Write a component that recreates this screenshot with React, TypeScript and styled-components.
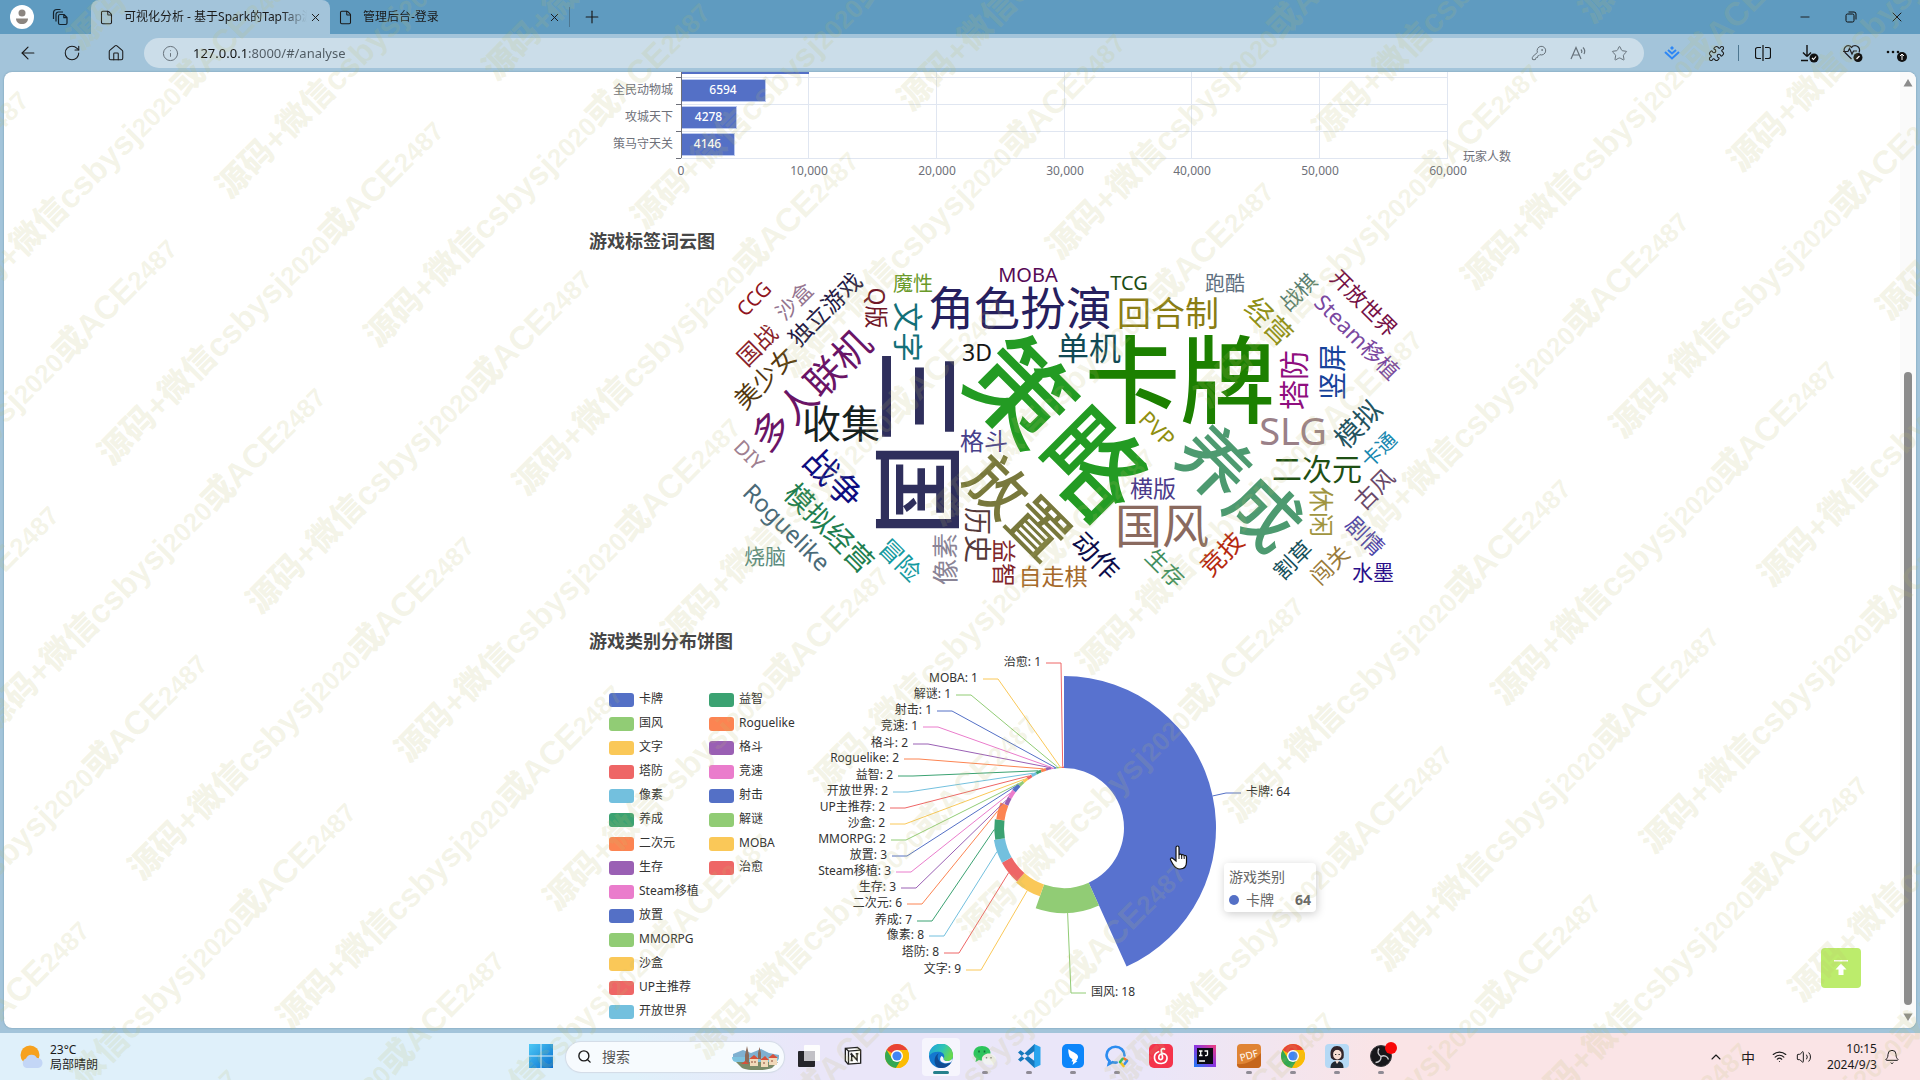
import React from "react";
import styled, { createGlobalStyle } from "styled-components";
import {
  ArrowLeft,
  RotateCw,
  House,
  Info,
  KeyRound,
  Star,
  Puzzle,
  Minus,
  X,
  Plus,
  File as FileIcon,
  Search,
  ChevronUp,
  Wifi,
  Volume2,
  Bell,
} from "lucide-react";

const FONT = `"Noto Sans", "Noto Sans CJK SC", sans-serif`;

const GlobalStyle = createGlobalStyle`
  * { box-sizing: border-box; }
  html, body, #root { height: 100%; }
  body { margin: 0; font-family: ${FONT}; font-size: 12px; color: #1a1a1a; overflow: hidden; }
  button { font: inherit; color: inherit; border: 0; padding: 0; background: none; cursor: pointer; }
  h2, ul { margin: 0; padding: 0; list-style: none; }
  svg { display: block; flex: none; }
`;

/* ---------- data ---------- */

const PALETTE = ["#5470c6", "#91cc75", "#fac858", "#ee6666", "#73c0de", "#3ba272", "#fc8452", "#9a60b4", "#ea7ccc"];

type Slice = { name: string; value: number; elbow: [number, number]; right?: boolean };

const SLICES: Slice[] = [
  { name: "卡牌", value: 64, elbow: [1226, 793], right: true },
  { name: "国风", value: 18, elbow: [1071, 993], right: true },
  { name: "文字", value: 9, elbow: [981, 970] },
  { name: "塔防", value: 8, elbow: [959, 953] },
  { name: "像素", value: 8, elbow: [944, 936] },
  { name: "养成", value: 7, elbow: [932, 921] },
  { name: "二次元", value: 6, elbow: [922, 904] },
  { name: "生存", value: 3, elbow: [916, 888] },
  { name: "Steam移植", value: 3, elbow: [911, 872] },
  { name: "放置", value: 3, elbow: [907, 856] },
  { name: "MMORPG", value: 2, elbow: [906, 840] },
  { name: "沙盒", value: 2, elbow: [905, 824] },
  { name: "UP主推荐", value: 2, elbow: [905, 808] },
  { name: "开放世界", value: 2, elbow: [908, 792] },
  { name: "益智", value: 2, elbow: [913, 776] },
  { name: "Roguelike", value: 2, elbow: [919, 759] },
  { name: "格斗", value: 2, elbow: [928, 744] },
  { name: "竞速", value: 1, elbow: [938, 727] },
  { name: "射击", value: 1, elbow: [952, 711] },
  { name: "解谜", value: 1, elbow: [971, 695] },
  { name: "MOBA", value: 1, elbow: [998, 679] },
  { name: "治愈", value: 1, elbow: [1061, 663] },
];

type Word = [string, number, number, number, number, string];

/* text, centre x, centre y, size, rotation, colour */
const WORDS: Word[] = [
  ["三国", 918, 443, 93, 90, "#2f2f5c"],
  ["策略", 1057, 428, 102, 45, "#239b23"],
  ["卡牌", 1180, 381, 95, 0, "#1c8000"],
  ["养成", 1239, 488, 71, 45, "#4d9a70"],
  ["放置", 1018, 507, 59, 45, "#78783c"],
  ["角色扮演", 1020, 308, 46, 0, "#26205e"],
  ["国风", 1162, 526, 47, 0, "#8a6a5f"],
  ["收集", 841, 424, 39, 0, "#16221f"],
  ["SLG", 1293, 431, 38, 0, "#9a8088"],
  ["多人联机", 811, 390, 38, -45, "#6a1466"],
  ["回合制", 1168, 313, 34, 0, "#8a7d14"],
  ["单机", 1089, 348, 32, 0, "#114a55"],
  ["战争", 834, 478, 34, 45, "#0d0d80"],
  ["文字", 908, 332, 30, 90, "#137078"],
  ["塔防", 1294, 380, 30, -90, "#8f0f7f"],
  ["竖屏", 1333, 372, 28, -90, "#17439a"],
  ["二次元", 1317, 469, 30, 0, "#1f5014"],
  ["模拟经营", 829, 528, 28, 45, "#1f7f50"],
  ["历史", 977, 535, 28, 90, "#553a3a"],
  ["动作", 1096, 556, 27, 45, "#0d0d4a"],
  ["经营", 1269, 321, 27, 45, "#8f8f14"],
  ["模拟", 1358, 424, 27, -45, "#24545f"],
  ["像素", 945, 559, 26, -90, "#8a8496"],
  ["休闲", 1321, 512, 25, 90, "#a09540"],
  ["美少女", 765, 378, 25, -45, "#54380f"],
  ["Roguelike", 787, 527, 24, 45, "#4a6a78"],
  ["格斗", 984, 441, 24, 0, "#47408a"],
  ["益智", 1004, 563, 24, 90, "#80252a"],
  ["竞技", 1222, 554, 25, -45, "#b5290f"],
  ["横版", 1153, 488, 23, 0, "#4a3a8a"],
  ["自走棋", 1053, 576, 23, 0, "#a5692a"],
  ["3D", 977, 352, 23, 0, "#161616"],
  ["独立游戏", 825, 309, 23, -45, "#251a45"],
  ["Q版", 877, 308, 23, 90, "#701828"],
  ["国战", 757, 345, 23, -45, "#8a1f2a"],
  ["冒险", 900, 560, 24, 45, "#159aa0"],
  ["PVP", 1157, 429, 22, 45, "#8f8f10"],
  ["古风", 1374, 489, 23, -45, "#6a4a6a"],
  ["生存", 1165, 568, 22, 45, "#3f8f60"],
  ["Steam移植", 1357, 337, 22, 45, "#7a48a0"],
  ["开放世界", 1364, 303, 21, 45, "#750f45"],
  ["剧情", 1365, 536, 22, 45, "#4f45a8"],
  ["割草", 1293, 560, 22, -45, "#14505a"],
  ["闯关", 1330, 565, 22, -45, "#9a7a3a"],
  ["烧脑", 765, 556, 21, 0, "#5c8c80"],
  ["水墨", 1373, 572, 21, 0, "#2a0f8a"],
  ["MOBA", 1028, 275, 20, 0, "#560a56"],
  ["CCG", 754, 299, 20, -45, "#8f1420"],
  ["沙盒", 794, 301, 21, -45, "#957590"],
  ["魔性", 913, 284, 20, 0, "#6a9a2a"],
  ["DIY", 749, 455, 20, 45, "#a08090"],
  ["TCG", 1129, 283, 20, 0, "#1d4d14"],
  ["跑酷", 1225, 284, 20, 0, "#607080"],
  ["战棋", 1298, 292, 21, -45, "#5a8070"],
  ["卡通", 1379, 450, 20, -45, "#1888b0"],
];

/* ---------- browser chrome ---------- */

const Desktop = styled.div`
  position: relative;
  height: 100vh;
  display: flex;
  flex-direction: column;
  overflow: hidden;
`;

const BrowserWindow = styled.div`
  flex: 1;
  min-height: 0;
  display: flex;
  flex-direction: column;
  background: #a3c4da;
`;

const TabStrip = styled.header`
  height: 34px;
  display: flex;
  align-items: center;
  padding-left: 6px;
  background: #5f9bc0;
`;

const StripButton = styled.button<{ $w: number }>`
  width: ${(p) => p.$w}px;
  height: 34px;
  display: flex;
  align-items: center;
  justify-content: center;
`;

const Tabs = styled.div`
  display: flex;
  align-self: stretch;
  margin-left: 9px;
`;

const Tab = styled.div<{ $active?: boolean }>`
  width: 239px;
  display: flex;
  align-items: center;
  padding: 0 7px 0 8px;
  border-radius: 8px 8px 0 0;
  background: ${(p) => (p.$active ? "#a3c4da" : "transparent")};
`;

const TabTitle = styled.span`
  flex: 1;
  min-width: 0;
  margin-left: 10px;
  overflow: hidden;
  white-space: nowrap;
  line-height: 20px;
  mask-image: linear-gradient(90deg, #000 86%, transparent);
`;

const Divider = styled.span<{ $h: number }>`
  width: 1px;
  height: ${(p) => p.$h}px;
  background: #4d7690;
`;

const Spacer = styled.span`
  flex: 1;
`;

const Toolbar = styled.nav`
  height: 38px;
  display: flex;
  align-items: center;
  padding: 0 1px 0 6px;
`;

const ToolButton = styled.button<{ $w?: number; $c?: string }>`
  width: ${(p) => p.$w ?? 44}px;
  height: 30px;
  display: flex;
  align-items: center;
  justify-content: center;
  color: ${(p) => p.$c ?? "#1a1a1a"};
`;

const AddressBar = styled.div`
  flex: 1;
  height: 30px;
  margin: 0 6px;
  padding: 0 5px 0 18px;
  display: flex;
  align-items: center;
  border-radius: 15px;
  background: #cbdde9;
  color: #66717a;
`;

const AddressInput = styled.input`
  flex: 1;
  min-width: 0;
  margin-left: 14px;
  padding: 0;
  border: 0;
  outline: 0;
  font: 13px/20px ${FONT};
  color: transparent;
  background: linear-gradient(90deg, #111 56px, #4f5a62 56px);
  background-clip: text;
`;

const Frame = styled.div`
  position: relative;
  flex: 1;
  min-height: 0;
  display: flex;
  margin: 0 4px 5px;
  border-radius: 8px;
  overflow: hidden;
  background: #fff;
  box-shadow: 0 0 2px #6d93ab;
`;

/* ---------- page ---------- */

const Page = styled.main`
  flex: 1;
  min-width: 0;
  overflow: hidden;
`;

const Column = styled.div`
  width: 1124px;
  max-width: 100%;
  margin: 0 auto;
`;

const SectionTitle = styled.h2`
  height: 30px;
  padding-left: 199px;
  font-size: 18px;
  line-height: 30px;
  font-weight: 700;
  color: #464646;
`;

const PieRow = styled.div`
  position: relative;
  display: flex;
  align-items: flex-start;
`;

const Legend = styled.ul`
  width: 416px;
  padding: 32px 0 0 219px;
  display: grid;
  grid-auto-flow: column;
  grid-template-rows: repeat(14, 24px);
  grid-template-columns: 100px 97px;
`;

const LegendButton = styled.button`
  height: 24px;
  display: flex;
  align-items: center;
  gap: 5px;
  white-space: nowrap;
  color: #333;
`;

const LegendLabel = styled.span`
  padding-bottom: 2px;
  line-height: 20px;
`;

const Swatch = styled.span<{ $c: string }>`
  width: 25px;
  height: 14px;
  border-radius: 3px;
  background: ${(p) => p.$c};
`;

const Tooltip = styled.div`
  position: absolute;
  left: 834px;
  top: 207px;
  width: 92px;
  height: 49px;
  padding: 3px 5px 4px 5px;
  border-radius: 4px;
  background: #fff;
  box-shadow: 1px 2px 10px rgba(0, 0, 0, 0.2);
  font-size: 14px;
  line-height: 21px;
  color: #666;
`;

const TooltipRow = styled.div`
  display: flex;
  align-items: center;
  gap: 7px;
  padding-top: 2px;
`;

const Dot = styled.span`
  width: 10px;
  height: 10px;
  border-radius: 50%;
  background: #5470c6;
`;

const Value = styled.strong`
  margin-left: auto;
`;

const Pointer = styled.svg`
  position: absolute;
  left: 779px;
  top: 189px;
`;

const BackTop = styled.button`
  position: absolute;
  right: 55px;
  bottom: 40px;
  width: 40px;
  height: 40px;
  display: flex;
  align-items: center;
  justify-content: center;
  border-radius: 4px;
  background: #bcec6c;
`;

const ScrollTrack = styled.div`
  width: 16px;
  display: flex;
  flex-direction: column;
  align-items: center;
  padding: 7px 0;
  background: #fafafa;
`;

const ScrollSpace = styled.div`
  flex: 285;
`;

const ScrollThumb = styled.div`
  flex: 634;
  width: 8px;
  margin-bottom: 8px;
  border-radius: 4px;
  background: #8b8b8b;
`;

/* ---------- taskbar ---------- */

const Taskbar = styled.footer`
  height: 47px;
  display: grid;
  grid-template-columns: 1fr auto 1fr;
  align-items: center;
  background: linear-gradient(90deg, #dff0fa 0%, #dff0fa 33%, #eae6f9 42%, #eae6f9 60%, #fae4e6 72%, #fae4e6 100%);
`;

const Weather = styled.button`
  justify-self: start;
  display: flex;
  align-items: center;
  gap: 7px;
  padding-left: 20px;
  text-align: left;
  line-height: 15px;
`;

const Apps = styled.div`
  display: flex;
  align-items: center;
  padding-left: 2px;
`;

const AppButton = styled.button`
  width: 44px;
  height: 47px;
  display: flex;
  align-items: center;
  justify-content: center;
`;

const AppTile = styled.span<{ $active?: boolean }>`
  width: 38px;
  height: 38px;
  padding-top: 6px;
  display: flex;
  flex-direction: column;
  align-items: center;
  gap: 3px;
  border-radius: 4px;
  background: ${(p) => (p.$active ? "#f6f5fd" : "transparent")};
`;

const AppIcon = styled.span`
  height: 24px;
  display: flex;
  align-items: center;
`;

const Indicator = styled.span<{ $kind?: "dot" | "bar" }>`
  width: ${(p) => (p.$kind === "bar" ? 16 : 6)}px;
  height: 3px;
  border-radius: 2px;
  background: ${(p) => (p.$kind === "bar" ? "#25808c" : p.$kind === "dot" ? "#8f8b95" : "transparent")};
`;

const SearchBox = styled.label`
  width: 218px;
  height: 30px;
  margin: 0 3px;
  padding: 0 4px 0 11px;
  display: flex;
  align-items: center;
  gap: 10px;
  border-radius: 15px;
  background: #f7fbfe;
  box-shadow: 0 0 1px 1px #d3dbe6;
`;

const SearchInput = styled.input`
  flex: 1;
  min-width: 0;
  padding: 0;
  border: 0;
  outline: 0;
  background: none;
  font: 14px/20px ${FONT};
  &::placeholder { color: #555; opacity: 1; }
`;

const Tray = styled.div`
  justify-self: end;
  display: flex;
  align-items: center;
  padding-right: 19px;
`;

const TrayButton = styled.button<{ $w: number }>`
  width: ${(p) => p.$w}px;
  height: 30px;
  display: flex;
  align-items: center;
  justify-content: center;
  font-size: 14px;
`;

const Clock = styled.button`
  width: 60px;
  margin: 0 6px 0 2px;
  text-align: right;
  line-height: 16px;
  white-space: nowrap;
`;

const WatermarkLayer = styled.svg`
  position: absolute;
  inset: 0;
  width: 100%;
  height: 100%;
  pointer-events: none;
`;

/* ---------- charts ---------- */

const BARS = [
  { name: "全民动物城", value: 6594, y: 90 },
  { name: "攻城天下", value: 4278, y: 117 },
  { name: "策马守天关", value: 4146, y: 144 },
];

function BarChart() {
  const x0 = 681;
  const x1 = 1448;
  const at = (v: number) => Math.round(x0 + ((x1 - x0) * v) / 60000);
  return (
    <svg width="1124" height="154" viewBox="390 72 1124 154" fontSize="12" fill="#6e7079">
      {[1, 2, 3, 4, 5, 6].map((i) => (
        <path key={i} d={`M${at(i * 10000) - 0.5} 72V158`} stroke="#e0e6f1" />
      ))}
      {[77, 104, 131, 158].map((y) => (
        <path key={y} d={`M${x0} ${y + 0.5}H${x1}`} stroke="#e0e6f1" />
      ))}
      <rect x={x0} y="60" width="128" height="14" fill="#5470c6" />
      {BARS.map((b) => (
        <g key={b.name}>
          <rect x={x0} y={b.y - 11} width={at(b.value) - x0 + 1} height="23" fill="#bccaf0" />
          <rect x={x0} y={b.y - 10} width={at(b.value) - x0} height="21" fill="#5470c6" />
          <text x={(x0 + at(b.value)) / 2} y={b.y + 4} textAnchor="middle" fill="#fff" fontWeight="500">{b.value}</text>
          <text x="673" y={b.y + 4} textAnchor="end">{b.name}</text>
        </g>
      ))}
      <path d="M681.5 72V158M676 77.5h5M676 104.5h5M676 131.5h5M676 158.5h5" stroke="#6e7079" />
      {[0, 1, 2, 3, 4, 5, 6].map((i) => (
        <text key={i} x={at(i * 10000)} y="175" textAnchor="middle">{i ? `${i}0,000` : "0"}</text>
      ))}
      <text x="1463" y="161">玩家人数</text>
    </svg>
  );
}

function WordCloud() {
  return (
    <svg width="1124" height="370" viewBox="390 256 1124 370" textAnchor="middle">
      {WORDS.map(([text, x, y, size, angle, color]) => (
        <text
          key={text}
          transform={`translate(${x} ${y}) rotate(${angle})`}
          y={Math.round(size * 0.37)}
          fontSize={size}
          fontWeight={size > 50 ? 500 : 400}
          fill={color}
        >
          {text}
        </text>
      ))}
    </svg>
  );
}

function PieChart() {
  const cx = 1064;
  const cy = 828;
  const inner = 60;
  const total = SLICES.reduce((s, d) => s + d.value, 0);
  const point = (r: number, a: number) => `${(cx + r * Math.sin(a)).toFixed(2)} ${(cy - r * Math.cos(a)).toFixed(2)}`;
  let acc = 0;
  return (
    <svg width="708" height="372" viewBox="806 656 708 372" fontSize="12" fill="#333">
      {SLICES.map((d, i) => {
        const a0 = (acc / total) * 2 * Math.PI;
        acc += d.value;
        const a1 = (acc / total) * 2 * Math.PI;
        const mid = (a0 + a1) / 2;
        const outer = inner + (d.value / 64) * (i === 0 ? 92 : 89);
        const color = PALETTE[i % 9];
        const [ex, ey] = d.elbow;
        const dir = d.right ? 1 : -1;
        return (
          <g key={d.name}>
            <path
              d={`M${point(inner, a0)}L${point(outer, a0)}A${outer} ${outer} 0 0 1 ${point(outer, a1)}L${point(inner, a1)}A${inner} ${inner} 0 0 0 ${point(inner, a0)}Z`}
              fill={i === 0 ? "#5872cf" : color}
            />
            <path d={`M${point(outer, mid)}L${ex} ${ey}h${15 * dir}`} stroke={color} fill="none" />
            <text x={ex + 20 * dir} y={ey + 3} textAnchor={d.right ? "start" : "end"}>
              {`${d.name}: ${d.value}`}
            </text>
          </g>
        );
      })}
    </svg>
  );
}

/* ---------- icons ---------- */

function TabPagesIcon() {
  return (
    <svg width="18" height="18" viewBox="0 0 18 18" fill="none" stroke="#14222c" strokeWidth="1.2" strokeLinejoin="round">
      <path d="M9 6.500h4l3 3v5.500a1.500 1.500 0 0 1-1.500 1.500H9A1.500 1.500 0 0 1 7.500 15V8A1.500 1.500 0 0 1 9 6.500zM12.800 6.500v3.200H16" />
      <path d="M5 13.500V6.500A2.500 2.500 0 0 1 7.500 4H12M2.500 11V5A3.500 3.500 0 0 1 6 1.500h3.500" />
    </svg>
  );
}

function ChromeIcon() {
  return (
    <svg width="24" height="24" viewBox="0 0 24 24">
      <circle cx="12" cy="12" r="12" fill="#fbbc05" />
      <path d="M12 12L1.600 6A12 12 0 0 1 22.400 6z" fill="#e94235" />
      <path d="M1.600 6A12 12 0 0 0 11 23.950L16.800 14.800 7 14.500z" fill="#34a853" />
      <path d="M12 6H22.400A12 12 0 0 1 11 23.950L17 14z" fill="#fbbc05" />
      <circle cx="12" cy="12" r="6" fill="#fff" />
      <circle cx="12" cy="12" r="4.600" fill="#4285f4" />
    </svg>
  );
}

const APPS: { name: string; kind?: "dot" | "bar"; icon: React.ReactNode }[] = [
  {
    name: "任务视图",
    icon: (
      <svg width="24" height="24" viewBox="0 0 24 24">
        <rect x="7" y="1" width="16" height="16" rx="1" fill="#fdfdfd" />
        <rect x="1" y="7" width="17" height="16" rx="1" fill="#26262b" />
        <rect x="7" y="7" width="11" height="10" fill="#c2c1c6" />
      </svg>
    ),
  },
  {
    name: "Notion",
    icon: (
      <svg width="18" height="20" viewBox="0 0 20 22">
        <path d="M1.500 2.500L15 1.500l3.500 3v14.500l-14 1-3-3.500z" fill="#fff" stroke="#222" strokeWidth="1.500" />
        <path d="M1.500 2.500l3.500 3 13.500-1M5 5.500v14.500" stroke="#222" strokeWidth="1.500" fill="none" />
        <path d="M8.500 16V9l6 6.500V8.500M7 9h2.500M7.300 16h2.500M13 8.500h3" stroke="#222" strokeWidth="1.600" fill="none" />
      </svg>
    ),
  },
  { name: "Chrome", icon: <ChromeIcon /> },
  {
    name: "Edge",
    kind: "bar",
    icon: (
      <svg width="24" height="24" viewBox="0 0 24 24">
        <defs>
          <linearGradient id="edgeTop" x1="0" y1="0" x2="1" y2="0.400">
            <stop offset="0" stopColor="#1d9fe0" />
            <stop offset="0.600" stopColor="#30c5b4" />
            <stop offset="1" stopColor="#67d94f" />
          </linearGradient>
        </defs>
        <circle cx="12" cy="12" r="12" fill="#1478cf" />
        <path d="M0 12a12 12 0 0 1 24-1c.3 4-2.500 6-5.500 6-3 0-4.500-1.200-4-2.500 1.500-1.500 1-5.500-3-6.500C7 7 2 8.500 0 12z" fill="url(#edgeTop)" />
        <path d="M10 9c-3 3-1 9.500 4.500 10.500 3 .5 6 0 8-1.500-3 5.500-9 7-13.500 5.500C4.500 21 4 12 10 9z" fill="#104b93" />
        <path d="M14.500 14.500c-.5 1.500 1.500 2.700 4 2.600 2-.1 4-1 5-2.600-.2 1.300-.6 2.600-1.300 3.600-3 1.600-8 1.600-10.200-.6-1.500-1.600-1-4 .5-5.500 1.200.3 2 1.500 2 2.500z" fill="#f6f5fd" />
      </svg>
    ),
  },
  {
    name: "微信",
    kind: "dot",
    icon: (
      <svg width="24" height="22" viewBox="0 0 24 22">
        <path d="M9 1c5 0 8.500 3 8.500 7s-3.500 7.500-8.500 7.500c-1 0-2-.1-3-.5L2.500 17l.8-3.500C1.500 12 .5 10.500.5 8.500.5 4 4 1 9 1z" fill="#2dc45c" />
        <path d="M16 8.500c4 0 7.200 2.500 7.200 5.700 0 1.800-.9 3.200-2.300 4.200l.6 2.300-2.600-1.300c-5 1.500-10-1-10-5.200 0-3.200 3.200-5.700 7.100-5.700z" fill="#f1f3f2" />
        <path d="M6 5.500v2M11.500 5.500v2" stroke="#14703a" strokeWidth="1.600" />
        <path d="M13.500 12v1.500M18 12v1.500" stroke="#888" strokeWidth="1.400" />
      </svg>
    ),
  },
  {
    name: "VS Code",
    kind: "dot",
    icon: (
      <svg width="24" height="24" viewBox="0 0 24 24">
        <path d="M17 0l6.500 3v18L17 24z" fill="#2aa5ee" />
        <path d="M17.500 0L1 15.500l2.500 2.300L17.500 7zM17.500 24L1 8.500l2.500-2.300L17.500 17z" fill="#1678bd" />
      </svg>
    ),
  },
  {
    name: "钉钉",
    kind: "dot",
    icon: (
      <svg width="22" height="24" viewBox="0 0 22 24">
        <rect width="22" height="24" rx="5" fill="#0d86fa" />
        <path d="M6.500 5c3 3 9 4 9.500 7.500.2 1.500-1 3-2 4.500h1.500l-5 4 .8-3.500H9.500l1-2.500c-2-.6-3.200-2-3.500-4C6.500 9 6 7 6.500 5z" fill="#fff" />
      </svg>
    ),
  },
  {
    name: "企业微信",
    kind: "dot",
    icon: (
      <svg width="24" height="24" viewBox="0 0 24 24" fill="none" strokeWidth="2.600" strokeLinecap="round">
        <path d="M19.500 11.500c0-5-4-8.700-9-8.700s-9 3.700-9 8.200c0 2.500 1.200 4.500 3 6l-.8 3.200 4-2c1.300.4 2.500.5 4 .3" stroke="#2c8cf0" />
        <path d="M19 14.500l3 2" stroke="#fb6b1f" />
        <path d="M22 17l-2.500 3" stroke="#2c8cf0" />
        <path d="M18.500 22l-2.500-3" stroke="#fcc419" />
        <path d="M15 18l2.500-3" stroke="#2fbf55" />
      </svg>
    ),
  },
  {
    name: "网易云音乐",
    icon: (
      <svg width="24" height="24" viewBox="0 0 24 24">
        <rect width="24" height="24" rx="5" fill="#f5334b" />
        <path d="M15.500 5c-2-1-3.600.2-3.200 2l1.200 6c.5 3-3.300 3.500-3.700 1-.4-3 2-4.500 4.700-4.300 5 .6 5 9.300-2 9.800-8.500.3-9-9.500-3-11.800" fill="none" stroke="#fff" strokeWidth="1.700" strokeLinecap="round" />
      </svg>
    ),
  },
  {
    name: "IntelliJ IDEA",
    icon: (
      <svg width="22" height="22" viewBox="0 0 22 22">
        <defs>
          <linearGradient id="ideaBg" x1="0" y1="1" x2="1" y2="0">
            <stop offset="0" stopColor="#1d7cf5" />
            <stop offset="0.500" stopColor="#8a35e0" />
            <stop offset="1" stopColor="#f0407c" />
          </linearGradient>
        </defs>
        <rect width="22" height="22" fill="url(#ideaBg)" />
        <rect x="3" y="3" width="16" height="16" fill="#0a0a12" />
        <path d="M5 6h3.500M6.700 6v4.500M5 10.500h3.500M10.500 6h3v3.500q0 1.200-2.500 1M5 16h6" stroke="#fff" strokeWidth="1.300" fill="none" />
      </svg>
    ),
  },
  {
    name: "PDF",
    kind: "dot",
    icon: (
      <svg width="24" height="24" viewBox="0 0 24 24">
        <rect width="24" height="24" rx="4" fill="#e08434" />
        <path d="M0 20C8 21 17 17 24 9v11a4 4 0 0 1-4 4H4a4 4 0 0 1-4-4z" fill="#c5651c" />
        <text x="12" y="15" fontSize="10" fill="#fff" textAnchor="middle" transform="rotate(-16 12 12)">PDF</text>
      </svg>
    ),
  },
  { name: "Chrome 2", kind: "dot", icon: <ChromeIcon /> },
  {
    name: "头像",
    kind: "dot",
    icon: (
      <svg width="24" height="24" viewBox="0 0 24 24">
        <rect width="24" height="24" rx="4" fill="#b5d9f5" />
        <path d="M6 14C4 5 8 2 12 2s8 3 6.500 12l-2 2h-8z" fill="#33252a" />
        <ellipse cx="12.300" cy="10.500" rx="4.200" ry="5" fill="#f7ddd2" />
        <path d="M8 8c2-3 6-3 8.500 0L16 4H9z" fill="#33252a" />
        <path d="M5.500 24c0-5 3-7 6.500-7s6.500 2 6.500 7z" fill="#222831" />
        <path d="M10 16.500h4.500L12 20z" fill="#f7ddd2" />
        <path d="M10 10.500h1.300M13.500 10.500h1.300" stroke="#222" />
      </svg>
    ),
  },
  {
    name: "OBS",
    kind: "dot",
    icon: (
      <svg width="32" height="28" viewBox="-2 0 32 28">
        <circle cx="14" cy="14" r="10.500" fill="#17171a" stroke="#3a3a3e" />
        <path d="M14 14.500c-3-2-4-5-2-8M14 14.500c3-1.500 6.500-.5 7.500 3M14 14.500c.3 3.500-2 6-5.500 6" stroke="#c9c9cc" strokeWidth="1.400" fill="none" />
        <circle cx="24" cy="6" r="6" fill="#f80808" />
      </svg>
    ),
  },
];

/* ---------- watermark ---------- */

const MARK_LENGTH = 490;

/* Staggered diagonal rows, limited to those that reach the screen. */
function markPositions() {
  const spots: [number, number][] = [];
  const diagonal = Math.SQRT1_2;
  for (let row = -4; row <= 30; row++) {
    const shift = row % 2 === 0 ? 0 : 272;
    for (let col = -4; col <= 5; col++) {
      const u = -251 + shift + col * 544;
      const v = 409 + row * 105;
      const left = (u + v) * diagonal;
      const bottom = (v - u) * diagonal;
      const right = left + MARK_LENGTH * diagonal;
      const top = bottom - MARK_LENGTH * diagonal;
      if (right > 0 && left < window.innerWidth && bottom > 0 && top < window.innerHeight) spots.push([u, v]);
    }
  }
  return spots;
}

function Watermark() {
  return (
    <WatermarkLayer aria-hidden="true">
      <g
        transform="rotate(-45)"
        fill="rgb(190,190,110)"
        fillOpacity="0.16"
        fontWeight="900"
        fontSize="33"
        fontFamily={`"Liberation Sans", "Noto Sans CJK SC", sans-serif`}
      >
        {markPositions().map(([x, y]) => (
          <text key={`${x},${y}`} x={x} y={y}>
            源码+微信csbysj<tspan fontSize="26">2020</tspan>或ACE<tspan fontSize="26">2487</tspan>
          </text>
        ))}
      </g>
    </WatermarkLayer>
  );
}

/* ---------- app ---------- */

export default function App() {
  return (
    <Desktop>
      <GlobalStyle />
      <BrowserWindow>
        <TabStrip>
          <StripButton $w={32} aria-label="个人资料">
            <svg width="24" height="24" viewBox="0 0 24 24">
              <circle cx="12" cy="12" r="12" fill="#fff" />
              <circle cx="12" cy="8" r="3.500" fill="#8b8580" />
              <path d="M6 13.500h12c0 3.500-2.500 5.500-6 5.500s-6-2-6-5.500z" fill="#8b8580" />
            </svg>
          </StripButton>
          <StripButton $w={44} aria-label="标签页操作">
            <TabPagesIcon />
          </StripButton>
          <Tabs>
            <Tab $active>
              <FileIcon size={15} strokeWidth={1.7} />
              <TabTitle>可视化分析 - 基于Spark的TapTap游</TabTitle>
              <StripButton $w={16} aria-label="关闭标签页"><X size={13} strokeWidth={1.8} /></StripButton>
            </Tab>
            <Tab>
              <FileIcon size={15} strokeWidth={1.7} />
              <TabTitle>管理后台-登录</TabTitle>
              <StripButton $w={16} aria-label="关闭标签页"><X size={13} strokeWidth={1.8} /></StripButton>
            </Tab>
          </Tabs>
          <Divider $h={20} />
          <StripButton $w={44} aria-label="新建标签页"><Plus size={20} strokeWidth={1.4} /></StripButton>
          <Spacer />
          <StripButton $w={46} aria-label="最小化"><Minus size={14} strokeWidth={1.6} /></StripButton>
          <StripButton $w={46} aria-label="还原">
            <svg width="12" height="12" viewBox="0 0 12 12" fill="none" stroke="#111">
              <rect x="1" y="3" width="8" height="8" rx="1.500" />
              <path d="M3.500 1H9a2 2 0 0 1 2 2v5.500" />
            </svg>
          </StripButton>
          <StripButton $w={46} aria-label="关闭"><X size={16} strokeWidth={1.5} /></StripButton>
        </TabStrip>

        <Toolbar>
          <ToolButton aria-label="后退"><ArrowLeft size={20} strokeWidth={1.4} /></ToolButton>
          <ToolButton aria-label="刷新"><RotateCw size={18} strokeWidth={1.4} /></ToolButton>
          <ToolButton aria-label="主页"><House size={18} strokeWidth={1.4} /></ToolButton>
          <AddressBar>
            <Info size={17} strokeWidth={1.4} />
            <AddressInput aria-label="地址" defaultValue="127.0.0.1:8000/#/analyse" />
            <ToolButton $w={40} $c="#66717a" aria-label="密码"><KeyRound size={16} strokeWidth={1.5} /></ToolButton>
            <ToolButton $w={40} $c="#66717a" aria-label="朗读">
              <svg width="18" height="16" viewBox="0 0 18 16" fill="none" stroke="currentColor" strokeWidth="1.200">
                <path d="M1 14L6 2.500 11 14M2.700 10h6.600M11 4.500c1 1 1 2.500.5 3.500M13 2.500c2 2 2 4.500 1 6.500" />
              </svg>
            </ToolButton>
            <ToolButton $w={40} $c="#66717a" aria-label="收藏"><Star size={17} strokeWidth={1.4} /></ToolButton>
          </AddressBar>
          <ToolButton aria-label="扩展程序">
            <svg width="16" height="14" viewBox="0 0 16 14" fill="none" stroke="#2d86f5" strokeWidth="2">
              <path d="M1 6l7 6.500L15 6M4 4l4 3.500L12 4" />
              <path d="M8 0l2 2-2 2-2-2z" fill="#2d86f5" stroke="none" />
            </svg>
          </ToolButton>
          <ToolButton aria-label="扩展"><Puzzle size={17} strokeWidth={1.5} /></ToolButton>
          <Divider $h={16} />
          <ToolButton $w={48} aria-label="拆分窗口">
            <svg width="16" height="16" viewBox="0 0 16 16" fill="none" stroke="#111" strokeWidth="1.200">
              <path d="M6 2.500H2.500a2 2 0 0 0-2 2v7a2 2 0 0 0 2 2H6M10 2.500h3.500a2 2 0 0 1 2 2v7a2 2 0 0 1-2 2H10M8 0v16" />
            </svg>
          </ToolButton>
          <ToolButton aria-label="下载">
            <svg width="20" height="20" viewBox="0 0 20 20" fill="none" stroke="#111" strokeWidth="1.400">
              <path d="M8 2v11M4 9.500l4 4M12 9.500l-4 4M2 17.500h7" />
              <circle cx="15" cy="15" r="4.500" fill="#111" stroke="none" />
              <path d="M13 15l1.500 1.500 2.500-3" stroke="#fff" strokeWidth="1.100" />
            </svg>
          </ToolButton>
          <ToolButton aria-label="浏览器健康">
            <svg width="20" height="20" viewBox="0 0 20 20" fill="none" stroke="#222" strokeWidth="1.200">
              <path d="M8.500 16L2 9.500C-.5 6 3 1.500 7 3l1.500 1.500L10 3c4-1.500 8 2 6 6.500M0 8.500h5l1.500-3L9 11l1.500-3H14" />
              <circle cx="15" cy="14.500" r="4.500" fill="#111" stroke="none" />
              <path d="M13.500 16l3-3" stroke="#fff" />
            </svg>
          </ToolButton>
          <ToolButton aria-label="设置及其他">
            <svg width="22" height="18" viewBox="0 0 22 18" fill="#111">
              <circle cx="2" cy="8" r="1.300" />
              <circle cx="7" cy="8" r="1.300" />
              <circle cx="12" cy="8" r="1.300" />
              <circle cx="16" cy="13" r="5" />
              <path d="M16 16v-5.500M14 12l2-2 2 2" stroke="#fff" fill="none" />
            </svg>
          </ToolButton>
        </Toolbar>

        <Frame>
          <Page>
            <Column>
              <BarChart />
              <SectionTitle>游戏标签词云图</SectionTitle>
              <WordCloud />
              <SectionTitle>游戏类别分布饼图</SectionTitle>
              <PieRow>
                <Legend>
                  {SLICES.map((d, i) => (
                    <li key={d.name}>
                      <LegendButton>
                        <Swatch $c={PALETTE[i % 9]} />
                        <LegendLabel>{d.name}</LegendLabel>
                      </LegendButton>
                    </li>
                  ))}
                </Legend>
                <PieChart />
                <Tooltip role="tooltip">
                  <div>游戏类别</div>
                  <TooltipRow>
                    <Dot />
                    卡牌
                    <Value>64</Value>
                  </TooltipRow>
                </Tooltip>
                <Pointer width="20" height="26" viewBox="0 0 20 26" aria-hidden="true">
                  <path
                    d="M7 2.500c0-2 3-2 3 0V10c.5-1.300 2.500-1 2.700.3.600-1 2.400-.7 2.500.6.800-.8 2.300-.3 2.300 1V17c0 4-2 7-6.500 7-4 0-5.500-2-7.200-5L1.600 15c-.8-1.500 1-2.800 2.400-1.500l3 2.500z"
                    fill="#fff"
                    stroke="#111"
                    strokeWidth="1.200"
                  />
                  <path d="M10 10v4M12.700 10.500V14M15.200 11.500V14" stroke="#111" />
                </Pointer>
              </PieRow>
            </Column>
          </Page>
          <ScrollTrack aria-hidden="true">
            <svg width="10" height="8" viewBox="0 0 10 8"><path d="M5 0l4.500 7.500h-9z" fill="#8b8b8b" /></svg>
            <ScrollSpace />
            <ScrollThumb />
            <svg width="10" height="8" viewBox="0 0 10 8"><path d="M5 8L.5.500h9z" fill="#8b8b8b" /></svg>
          </ScrollTrack>
          <BackTop aria-label="回到顶部">
            <svg width="14" height="16" viewBox="0 0 14 16" fill="#fff">
              <path d="M0 0h14v1.500H0zM7 3.500l5.500 6H9.500V15h-5V9.500h-3z" />
            </svg>
          </BackTop>
        </Frame>
      </BrowserWindow>

      <Taskbar>
        <Weather>
          <svg width="23" height="24" viewBox="0 0 23 24">
            <circle cx="10" cy="10" r="9.500" fill="#f6a11e" />
            <path d="M6.500 23a5 5 0 0 1-.5-9.500 6 6 0 0 1 11-.5 5 5 0 0 1 1 10z" fill="#c3d6f6" />
          </svg>
          <span>
            23°C
            <br />
            局部晴朗
          </span>
        </Weather>
        <Apps>
          <AppButton aria-label="开始">
            <AppTile>
              <AppIcon>
                <svg width="24" height="24" viewBox="0 0 24 24">
                  <defs>
                    <linearGradient id="startBg" x1="0" y1="0" x2="1" y2="1">
                      <stop offset="0" stopColor="#4cc8f5" />
                      <stop offset="1" stopColor="#0a70cf" />
                    </linearGradient>
                  </defs>
                  <path d="M0 0h11.500v11.500H0zM12.500 0H24v11.500H12.500zM0 12.500h11.500V24H0zM12.500 12.500H24V24H12.500z" fill="url(#startBg)" />
                </svg>
              </AppIcon>
            </AppTile>
          </AppButton>
          <SearchBox>
            <Search size={15} strokeWidth={2.200} />
            <SearchInput placeholder="搜索" aria-label="搜索" />
            <svg width="48" height="26" viewBox="0 0 48 26">
              <path d="M1 10l10-4 8 3 10-4 8 4 10 2v4H1z" fill="#7fb0d0" />
              <path d="M0 13h47c0 4-3 5-4 5H4c-3 0-4-3-4-5z" fill="#7ec3df" />
              <path d="M4 18h42l-6 6c-9 3-23 3-30 0z" fill="#7a8a68" />
              <path d="M13 20v-9l2-9 2 9v9zM26 15v-6l1.500-6L29 9v6z" fill="#8c6a58" />
              <path d="M18 14h8v8h-8zM29 15h7v8h-7zM37 13h8v8h-8z" fill="#f1d9ba" />
              <path d="M17 15l5-4 5 4zM28 16l5-4 4 4zM36 14l5-4 5 4zM9 20l4-3 4 3z" fill="#d8513a" />
              <path d="M20 17v2M23 17v2M32 18v2M40 16v2" stroke="#8c4a38" />
            </svg>
          </SearchBox>
          {APPS.map((a) => (
            <AppButton key={a.name} aria-label={a.name}>
              <AppTile $active={a.kind === "bar"}>
                <AppIcon>{a.icon}</AppIcon>
                <Indicator $kind={a.kind} />
              </AppTile>
            </AppButton>
          ))}
        </Apps>
        <Tray>
          <TrayButton $w={30} aria-label="显示隐藏的图标"><ChevronUp size={16} strokeWidth={1.6} /></TrayButton>
          <TrayButton $w={34}>中</TrayButton>
          <TrayButton $w={28} aria-label="网络"><Wifi size={15} strokeWidth={1.8} /></TrayButton>
          <TrayButton $w={22} aria-label="音量"><Volume2 size={16} strokeWidth={1.5} /></TrayButton>
          <Clock>
            10:15
            <br />
            2024/9/3
          </Clock>
          <TrayButton $w={18} aria-label="通知"><Bell size={16} strokeWidth={1.5} /></TrayButton>
        </Tray>
      </Taskbar>
      <Watermark />
    </Desktop>
  );
}
